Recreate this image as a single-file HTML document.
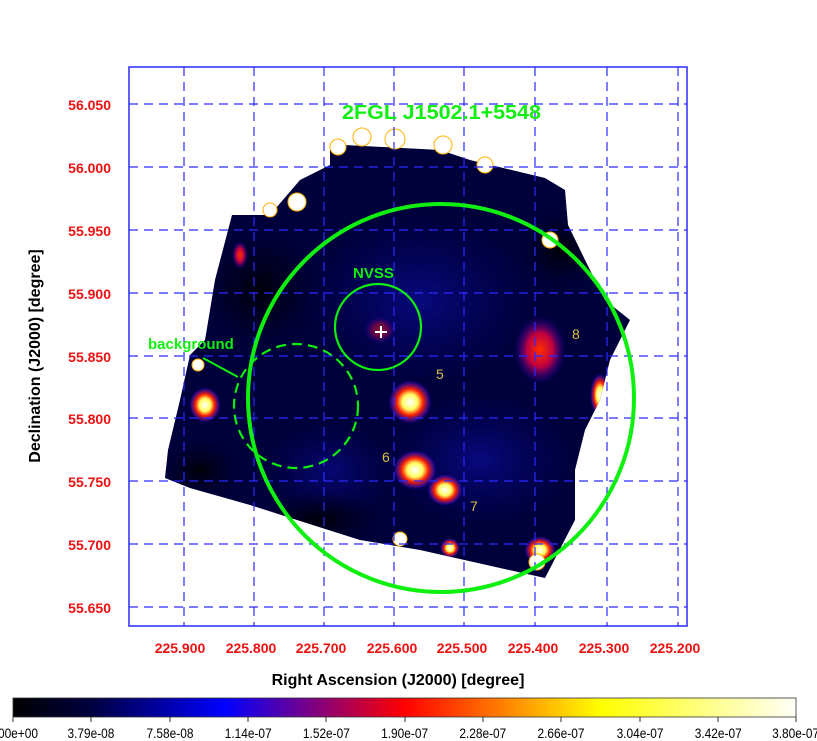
<!DOCTYPE html>
<html><head><style>
html,body{margin:0;padding:0;background:#fff;}
body{width:817px;height:741px;overflow:hidden;position:relative;font-family:"Liberation Sans",sans-serif;}
</style></head><body>
<svg width="817" height="741" xmlns="http://www.w3.org/2000/svg" style="position:absolute;left:0;top:0">
<defs>
<radialGradient id="hot"><stop offset="0" stop-color="#fff"/><stop offset="0.35" stop-color="#ffff60"/><stop offset="0.6" stop-color="#ff2000"/><stop offset="0.85" stop-color="#6010a0" stop-opacity="0.6"/><stop offset="1" stop-color="#0000c0" stop-opacity="0"/></radialGradient>
<radialGradient id="red"><stop offset="0" stop-color="#ff3000"/><stop offset="0.5" stop-color="#c00040"/><stop offset="1" stop-color="#2000c0" stop-opacity="0"/></radialGradient>
<radialGradient id="blu"><stop offset="0" stop-color="#1818ff"/><stop offset="1" stop-color="#0000a0" stop-opacity="0"/></radialGradient>
<radialGradient id="dark"><stop offset="0" stop-color="#000008"/><stop offset="1" stop-color="#000020" stop-opacity="0"/></radialGradient>
<linearGradient id="cb" x1="0" x2="1">
<stop offset="0" stop-color="#000"/><stop offset="0.1" stop-color="#000040"/><stop offset="0.27" stop-color="#0000ff"/><stop offset="0.5" stop-color="#ff0000"/><stop offset="0.75" stop-color="#ffff00"/><stop offset="1" stop-color="#fffff8"/></linearGradient>
<clipPath id="dc"><path d="M330,150 L345,145 L440,150 L470,160 L545,178 L565,190 L568,225 L585,260 L605,300 L630,320 L610,360 L600,400 L585,430 L575,470 L575,520 L545,578 L500,568 L420,550 L360,540 L250,505 L190,488 L165,478 L168,450 L180,400 L190,355 L205,340 L215,280 L232,215 L270,215 L300,180 L330,165 Z"/></clipPath>
</defs>
<g clip-path="url(#dc)">
<rect x="150" y="130" width="500" height="470" fill="#00003a"/>
<ellipse cx="420" cy="300" rx="120" ry="90" fill="url(#blu)" opacity="0.35"/>
<ellipse cx="480" cy="460" rx="100" ry="70" fill="url(#blu)" opacity="0.35"/>
<ellipse cx="330" cy="470" rx="70" ry="50" fill="url(#blu)" opacity="0.3"/>
<ellipse cx="260" cy="290" rx="60" ry="60" fill="url(#dark)"/>
<ellipse cx="320" cy="520" rx="60" ry="30" fill="url(#dark)"/>
<ellipse cx="200" cy="470" rx="40" ry="30" fill="url(#dark)"/>
<ellipse cx="560" cy="250" rx="40" ry="40" fill="url(#dark)"/>
<ellipse cx="380" cy="330" rx="16" ry="14" fill="url(#red)" opacity="0.5"/>
<ellipse cx="540" cy="350" rx="26" ry="34" fill="url(#red)"/>
<ellipse cx="410" cy="402" rx="22" ry="22" fill="url(#hot)"/>
<ellipse cx="415" cy="470" rx="22" ry="20" fill="url(#hot)"/>
<ellipse cx="445" cy="490" rx="18" ry="16" fill="url(#hot)"/>
<ellipse cx="205" cy="405" rx="16" ry="18" fill="url(#hot)"/>
<ellipse cx="600" cy="395" rx="10" ry="22" fill="url(#hot)"/>
<ellipse cx="240" cy="255" rx="8" ry="14" fill="url(#red)"/>
<ellipse cx="540" cy="550" rx="16" ry="14" fill="url(#hot)"/>
<ellipse cx="450" cy="548" rx="10" ry="10" fill="url(#hot)"/>
</g>
<g fill="#fff" stroke="#ffb000" stroke-width="1">
<circle cx="338" cy="147" r="8"/><circle cx="362" cy="137" r="9"/><circle cx="395" cy="139" r="10"/>
<circle cx="443" cy="145" r="9"/><circle cx="485" cy="165" r="8"/><circle cx="297" cy="202" r="9"/>
<circle cx="270" cy="210" r="7"/><circle cx="550" cy="240" r="8"/><circle cx="198" cy="365" r="6"/>
<circle cx="400" cy="539" r="7"/><circle cx="537" cy="562" r="8"/>
</g>
<g stroke="#2a2aff" stroke-width="1.2" stroke-dasharray="9,6" fill="none">
<path d="M184,67V626M254,67V626M324,67V626M394,67V626M464,67V626M535,67V626M607,67V626M678,67V626"/>
<path d="M129,104H687M129,167H687M129,230H687M129,293H687M129,356H687M129,418H687M129,481H687M129,544H687M129,607H687"/>
</g>
<rect x="129" y="67" width="558" height="559" fill="none" stroke="#2a2aff" stroke-width="1.5"/>
<g fill="none" stroke="#10f010">
<ellipse cx="441" cy="398" rx="193" ry="194" stroke-width="4"/>
<circle cx="378" cy="327" r="43" stroke-width="2.2"/>
<circle cx="296" cy="406" r="62" stroke-width="2.2" stroke-dasharray="10,6"/>
<path d="M203,358 L238,377" stroke-width="2"/>
</g>
<path d="M375,332h12M381,326v12" stroke="#fff" stroke-width="2"/>
<g font-family="Liberation Sans,sans-serif" font-weight="bold" fill="#10f010">
<text x="342" y="119" font-size="20" textLength="199" lengthAdjust="spacingAndGlyphs">2FGL J1502.1+5548</text>
<text x="353" y="278" font-size="15">NVSS</text>
<text x="148" y="349" font-size="15">background</text>
</g>
<g font-family="Liberation Sans,sans-serif" font-size="14" fill="#d8c040">
<text x="436" y="379">5</text><text x="382" y="462">6</text><text x="470" y="511">7</text><text x="572" y="339">8</text>
</g>
<g font-family="Liberation Sans,sans-serif" font-weight="bold" font-size="14" fill="#f01010" text-anchor="end">
<text x="111" y="110">56.050</text><text x="111" y="173">56.000</text><text x="111" y="236">55.950</text>
<text x="111" y="299">55.900</text><text x="111" y="362">55.850</text><text x="111" y="424">55.800</text>
<text x="111" y="487">55.750</text><text x="111" y="550">55.700</text><text x="111" y="613">55.650</text>
</g>
<g font-family="Liberation Sans,sans-serif" font-weight="bold" font-size="14" fill="#f01010" text-anchor="middle">
<text x="180" y="653">225.900</text><text x="251" y="653">225.800</text><text x="321" y="653">225.700</text>
<text x="392" y="653">225.600</text><text x="462" y="653">225.500</text><text x="533" y="653">225.400</text>
<text x="604" y="653">225.300</text><text x="675" y="653">225.200</text>
</g>
<text x="398" y="685" text-anchor="middle" font-family="Liberation Sans,sans-serif" font-weight="bold" font-size="16">Right Ascension (J2000) [degree]</text>
<text transform="translate(40,356) rotate(-90)" text-anchor="middle" font-family="Liberation Sans,sans-serif" font-weight="bold" font-size="16">Declination (J2000) [degree]</text>
<rect x="13" y="698" width="783" height="19" fill="url(#cb)" stroke="#333" stroke-width="0.8"/>
<g stroke="#333"><path d="M13,717v5M91,717v5M170,717v5M248,717v5M326,717v5M405,717v5M483,717v5M561,717v5M640,717v5M718,717v5M796,717v5"/></g>
<g font-family="Liberation Sans,sans-serif" font-size="14" fill="#000" text-anchor="middle" transform="scale(0.85,1)">
<text x="15.3" y="738">0.00e+00</text><text x="107" y="738">3.79e-08</text><text x="200" y="738">7.58e-08</text>
<text x="292" y="738">1.14e-07</text><text x="384" y="738">1.52e-07</text><text x="476" y="738">1.90e-07</text>
<text x="568" y="738">2.28e-07</text><text x="660" y="738">2.66e-07</text><text x="753" y="738">3.04e-07</text>
<text x="845" y="738">3.42e-07</text><text x="936" y="738">3.80e-07</text>
</g>
</svg>
</body></html>
